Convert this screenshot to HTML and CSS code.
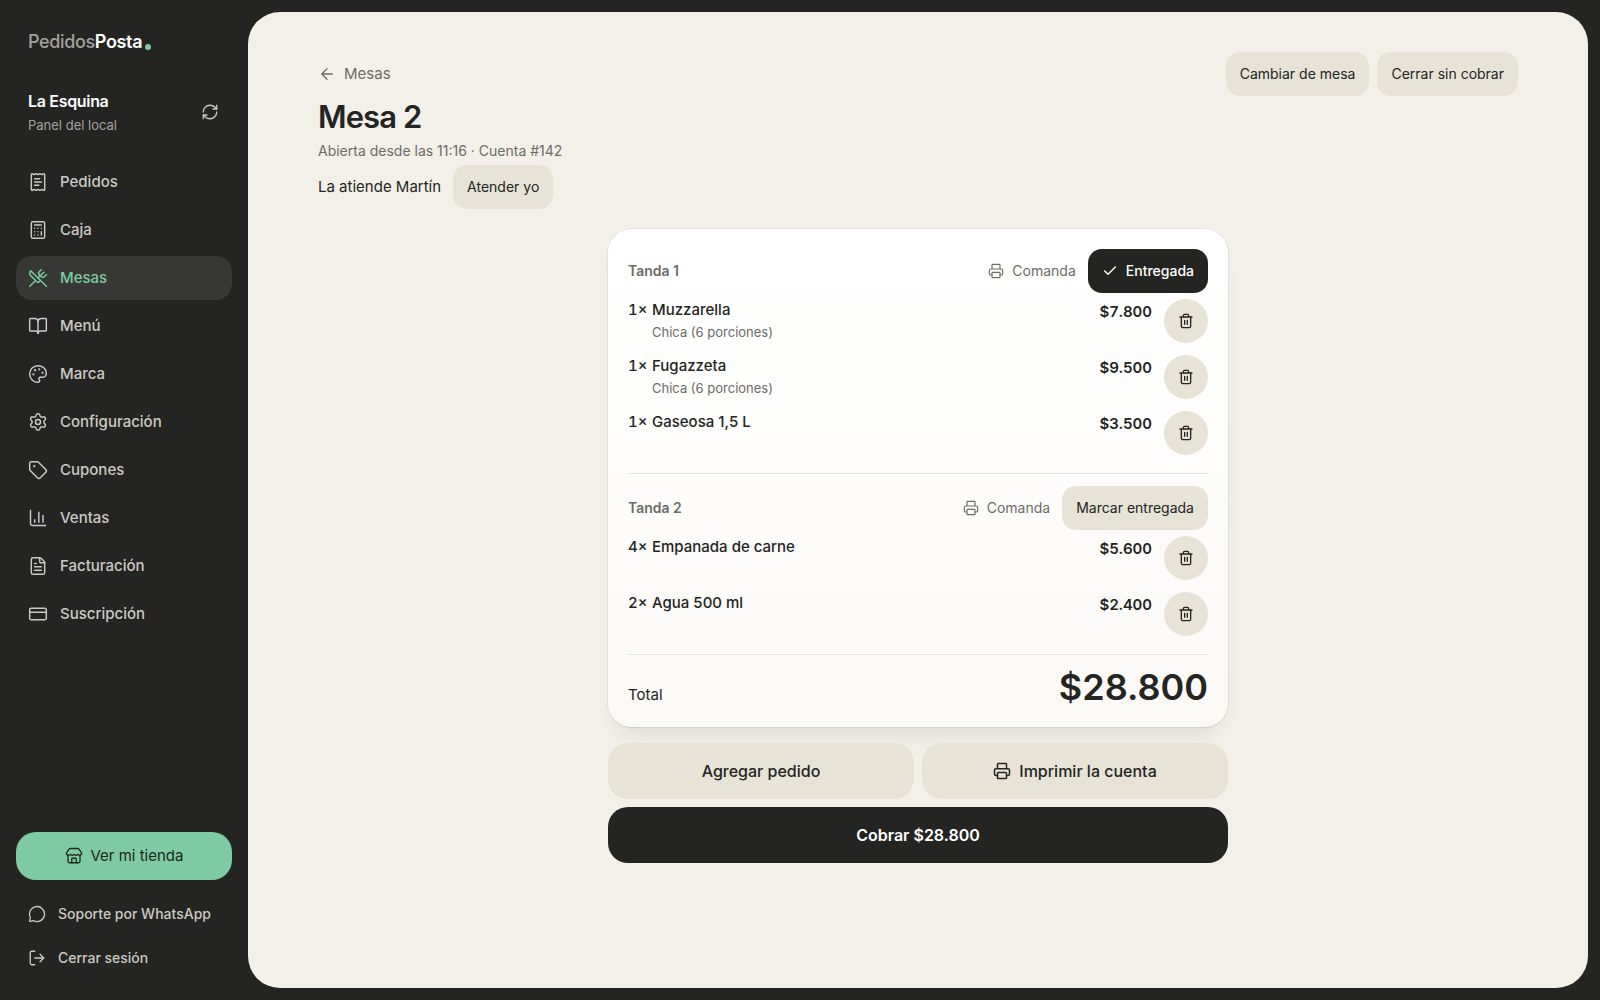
FILE: index.html
```html
<!DOCTYPE html>
<html lang="es">
<head>
<meta charset="utf-8">
<meta name="viewport" content="width=device-width, initial-scale=1">
<title>Mesa 2 · PedidosPosta</title>
<link rel="stylesheet" href="styles.css">
</head>
<body>
<svg class="sprite" aria-hidden="true">
  <symbol id="receipt" viewBox="0 0 24 24"><path d="M13 16H8M14 8H8M16 12H8M4 3a1 1 0 0 1 1-1 1.3 1.3 0 0 1 .7.2l.933.6a1.3 1.3 0 0 0 1.4 0l.934-.6a1.3 1.3 0 0 1 1.4 0l.933.6a1.3 1.3 0 0 0 1.4 0l.933-.6a1.3 1.3 0 0 1 1.4 0l.934.6a1.3 1.3 0 0 0 1.4 0l.933-.6A1.3 1.3 0 0 1 19 2a1 1 0 0 1 1 1v18a1 1 0 0 1-1 1 1.3 1.3 0 0 1-.7-.2l-.933-.6a1.3 1.3 0 0 0-1.4 0l-.934.6a1.3 1.3 0 0 1-1.4 0l-.933-.6a1.3 1.3 0 0 0-1.4 0l-.933.6a1.3 1.3 0 0 1-1.4 0l-.934-.6a1.3 1.3 0 0 0-1.4 0l-.933.6a1.3 1.3 0 0 1-.7.2 1 1 0 0 1-1-1z"/></symbol>
  <symbol id="calculator" viewBox="0 0 24 24"><rect width="16" height="20" x="4" y="2" rx="2"/><path d="M8 6h8M16 14v4M16 10h.01M12 10h.01M8 10h.01M12 14h.01M8 14h.01M12 18h.01M8 18h.01"/></symbol>
  <symbol id="utensils" viewBox="0 0 24 24"><path d="m16 2-2.3 2.3a3 3 0 0 0 0 4.2l1.8 1.8a3 3 0 0 0 4.2 0L22 8"/><path d="M15 15 3.3 3.3a4.2 4.2 0 0 0 0 6l7.3 7.3c.7.7 2 .7 2.8 0L15 15Zm0 0 7 7"/><path d="m2.1 21.8 6.4-6.3M19 5l-7 7"/></symbol>
  <symbol id="book" viewBox="0 0 24 24"><path d="M12 7v14"/><path d="M3 18a1 1 0 0 1-1-1V4a1 1 0 0 1 1-1h5a4 4 0 0 1 4 4 4 4 0 0 1 4-4h5a1 1 0 0 1 1 1v13a1 1 0 0 1-1 1h-6a3 3 0 0 0-3 3 3 3 0 0 0-3-3z"/></symbol>
  <symbol id="palette" viewBox="0 0 24 24"><path d="M12 22a1 1 0 0 1 0-20 10 9 0 0 1 10 9 5 5 0 0 1-5 5h-2.25a1.75 1.75 0 0 0-1.4 2.8l.3.4a1.75 1.75 0 0 1-1.4 2.8z"/><circle cx="13.5" cy="6.5" r=".5"/><circle cx="17.5" cy="10.5" r=".5"/><circle cx="6.5" cy="12.5" r=".5"/><circle cx="8.5" cy="7.5" r=".5"/></symbol>
  <symbol id="settings" viewBox="0 0 24 24"><path d="M9.671 4.136a2.34 2.34 0 0 1 4.659 0 2.34 2.34 0 0 0 3.319 1.915 2.34 2.34 0 0 1 2.33 4.033 2.34 2.34 0 0 0 0 3.831 2.34 2.34 0 0 1-2.33 4.033 2.34 2.34 0 0 0-3.319 1.915 2.34 2.34 0 0 1-4.659 0 2.34 2.34 0 0 0-3.32-1.915 2.34 2.34 0 0 1-2.33-4.033 2.34 2.34 0 0 0 0-3.831A2.34 2.34 0 0 1 6.35 6.051a2.34 2.34 0 0 0 3.319-1.915"/><circle cx="12" cy="12" r="3"/></symbol>
  <symbol id="tag" viewBox="0 0 24 24"><path d="M12.586 2.586A2 2 0 0 0 11.172 2H4a2 2 0 0 0-2 2v7.172a2 2 0 0 0 .586 1.414l8.704 8.704a2.426 2.426 0 0 0 3.42 0l6.58-6.58a2.426 2.426 0 0 0 0-3.42z"/><circle cx="7.5" cy="7.5" r=".5"/></symbol>
  <symbol id="chart" viewBox="0 0 24 24"><path d="M3 3v16a2 2 0 0 0 2 2h16M18 17V9M13 17V5M8 17v-3"/></symbol>
  <symbol id="file" viewBox="0 0 24 24"><path d="M6 22a2 2 0 0 1-2-2V4a2 2 0 0 1 2-2h8a2.4 2.4 0 0 1 1.704.706l3.588 3.588A2.4 2.4 0 0 1 20 8v12a2 2 0 0 1-2 2z"/><path d="M14 2v5a1 1 0 0 0 1 1h5M10 9H8M16 13H8M16 17H8"/></symbol>
  <symbol id="card" viewBox="0 0 24 24"><rect width="20" height="14" x="2" y="5" rx="2"/><path d="M2 10h20"/></symbol>
  <symbol id="store" viewBox="0 0 24 24"><path d="M15 21v-5a1 1 0 0 0-1-1h-4a1 1 0 0 0-1 1v5"/><path d="M17.774 10.31a1.12 1.12 0 0 0-1.549 0 2.5 2.5 0 0 1-3.451 0 1.12 1.12 0 0 0-1.548 0 2.5 2.5 0 0 1-3.452 0 1.12 1.12 0 0 0-1.549 0 2.5 2.5 0 0 1-3.77-3.248l2.889-4.184A2 2 0 0 1 7 2h10a2 2 0 0 1 1.653.873l2.895 4.192a2.5 2.5 0 0 1-3.774 3.244"/><path d="M4 10.95V19a2 2 0 0 0 2 2h12a2 2 0 0 0 2-2v-8.05"/></symbol>
  <symbol id="message" viewBox="0 0 24 24"><path d="M2.992 16.342a2 2 0 0 1 .094 1.167l-1.065 3.29a1 1 0 0 0 1.236 1.168l3.413-.998a2 2 0 0 1 1.099.092 10 10 0 1 0-4.777-4.719"/></symbol>
  <symbol id="logout" viewBox="0 0 24 24"><path d="m16 17 5-5-5-5M21 12H9M9 21H5a2 2 0 0 1-2-2V5a2 2 0 0 1 2-2h4"/></symbol>
  <symbol id="refresh" viewBox="0 0 24 24"><path d="M3 12a9 9 0 0 1 9-9 9.75 9.75 0 0 1 6.74 2.74L21 8"/><path d="M21 3v5h-5M21 12a9 9 0 0 1-9 9 9.75 9.75 0 0 1-6.74-2.74L3 16"/><path d="M8 16H3v5"/></symbol>
  <symbol id="printer" viewBox="0 0 24 24"><path d="M6 18H4a2 2 0 0 1-2-2v-5a2 2 0 0 1 2-2h16a2 2 0 0 1 2 2v5a2 2 0 0 1-2 2h-2M6 9V3a1 1 0 0 1 1-1h10a1 1 0 0 1 1 1v6"/><rect x="6" y="14" width="12" height="8" rx="1"/></symbol>
  <symbol id="trash" viewBox="0 0 24 24"><path d="M10 11v6M14 11v6M19 6v14a2 2 0 0 1-2 2H7a2 2 0 0 1-2-2V6M3 6h18M8 6V4a2 2 0 0 1 2-2h4a2 2 0 0 1 2 2v2"/></symbol>
  <symbol id="check" viewBox="0 0 24 24"><path d="M20 6 9 17l-5-5"/></symbol>
  <symbol id="arrow-left" viewBox="0 0 24 24"><path d="m12 19-7-7 7-7M19 12H5"/></symbol>
</svg>

<div class="app">
  <aside class="sidebar">
    <a class="logo" href="#"><span class="logo-light">Pedidos</span>Posta<span class="logo-dot"></span></a>
    <div class="shop">
      <div>
        <div class="shop-name">La Esquina</div>
        <div class="shop-sub">Panel del local</div>
      </div>
      <button class="refresh" type="button" aria-label="Actualizar"><svg class="icon icon-18"><use href="#refresh"/></svg></button>
    </div>
    <nav class="nav">
      <a class="nav-link" href="#"><svg class="icon icon-20"><use href="#receipt"/></svg>Pedidos</a>
      <a class="nav-link" href="#"><svg class="icon icon-20"><use href="#calculator"/></svg>Caja</a>
      <a class="nav-link active" href="#" aria-current="page"><svg class="icon icon-20"><use href="#utensils"/></svg>Mesas</a>
      <a class="nav-link" href="#"><svg class="icon icon-20"><use href="#book"/></svg>Menú</a>
      <a class="nav-link" href="#"><svg class="icon icon-20"><use href="#palette"/></svg>Marca</a>
      <a class="nav-link" href="#"><svg class="icon icon-20"><use href="#settings"/></svg>Configuración</a>
      <a class="nav-link" href="#"><svg class="icon icon-20"><use href="#tag"/></svg>Cupones</a>
      <a class="nav-link" href="#"><svg class="icon icon-20"><use href="#chart"/></svg>Ventas</a>
      <a class="nav-link" href="#"><svg class="icon icon-20"><use href="#file"/></svg>Facturación</a>
      <a class="nav-link" href="#"><svg class="icon icon-20"><use href="#card"/></svg>Suscripción</a>
    </nav>
    <div class="sidebar-foot">
      <a class="store-link" href="#"><svg class="icon icon-18"><use href="#store"/></svg>Ver mi tienda</a>
      <a class="foot-link" href="#"><svg class="icon icon-18"><use href="#message"/></svg>Soporte por WhatsApp</a>
      <button class="foot-link" type="button"><svg class="icon icon-18"><use href="#logout"/></svg>Cerrar sesión</button>
    </div>
  </aside>

  <main class="main">
    <div class="content">
      <header class="head">
        <div>
          <a class="back" href="#"><svg class="icon icon-18"><use href="#arrow-left"/></svg>Mesas</a>
          <h1 class="title">Mesa 2</h1>
          <p class="meta">Abierta desde las 11:16 · Cuenta #142</p>
          <div class="waiter"><span>La atiende Martín</span><button class="btn" type="button">Atender yo</button></div>
        </div>
        <div class="head-actions">
          <button class="btn" type="button">Cambiar de mesa</button>
          <button class="btn" type="button">Cerrar sin cobrar</button>
        </div>
      </header>

      <div class="bill">
        <div class="ticket">
          <section class="round">
            <div class="round-head">
              <h2 class="round-title">Tanda 1</h2>
              <button class="ghost" type="button"><svg class="icon icon-16"><use href="#printer"/></svg>Comanda</button>
              <button class="btn dark" type="button"><svg class="icon icon-16 strong"><use href="#check"/></svg>Entregada</button>
            </div>
            <ul class="items">
              <li class="item"><span class="qty">1×</span><div class="name">Muzzarella<div class="detail">Chica (6 porciones)</div></div><span class="price">$7.800</span><button class="trash" type="button" aria-label="Quitar Muzzarella"><svg class="icon icon-16 strong"><use href="#trash"/></svg></button></li>
              <li class="item"><span class="qty">1×</span><div class="name">Fugazzeta<div class="detail">Chica (6 porciones)</div></div><span class="price">$9.500</span><button class="trash" type="button" aria-label="Quitar Fugazzeta"><svg class="icon icon-16 strong"><use href="#trash"/></svg></button></li>
              <li class="item"><span class="qty">1×</span><div class="name">Gaseosa 1,5 L</div><span class="price">$3.500</span><button class="trash" type="button" aria-label="Quitar Gaseosa"><svg class="icon icon-16 strong"><use href="#trash"/></svg></button></li>
            </ul>
          </section>
          <section class="round">
            <div class="round-head">
              <h2 class="round-title">Tanda 2</h2>
              <button class="ghost" type="button"><svg class="icon icon-16"><use href="#printer"/></svg>Comanda</button>
              <button class="btn" type="button">Marcar entregada</button>
            </div>
            <ul class="items">
              <li class="item"><span class="qty">4×</span><div class="name">Empanada de carne</div><span class="price">$5.600</span><button class="trash" type="button" aria-label="Quitar Empanada de carne"><svg class="icon icon-16 strong"><use href="#trash"/></svg></button></li>
              <li class="item"><span class="qty">2×</span><div class="name">Agua 500 ml</div><span class="price">$2.400</span><button class="trash" type="button" aria-label="Quitar Agua 500 ml"><svg class="icon icon-16 strong"><use href="#trash"/></svg></button></li>
            </ul>
          </section>
          <div class="total"><span>Total</span><strong class="total-value">$28.800</strong></div>
        </div>
        <div class="actions">
          <button class="action" type="button">Agregar pedido</button>
          <button class="action" type="button"><svg class="icon icon-18 strong"><use href="#printer"/></svg>Imprimir la cuenta</button>
          <button class="action pay" type="button">Cobrar $28.800</button>
        </div>
      </div>
    </div>
  </main>
</div>
</body>
</html>
```
FILE: styles.css
```css
:root {
  --ink: #242522;
  --paper: #f3f0e9;
  --sand: #e7e3d7;
  --muted: #6d6c67;
  --green: #7ecba3;
  --line: #e5e4e1;
}

* { box-sizing: border-box; }

body {
  margin: 0;
  background: var(--ink);
  color: var(--ink);
  font-family: Inter, "Liberation Sans", sans-serif;
  font-size: 15px;
  line-height: 22px;
}

h1, h2, p, ul { margin: 0; padding: 0; }
ul { list-style: none; }
a { color: inherit; text-decoration: none; }
button { border: 0; background: none; color: inherit; font: inherit; cursor: pointer; }

.sprite { display: none; }
.icon { flex: none; fill: none; stroke: currentColor; stroke-width: 1.75; stroke-linecap: round; stroke-linejoin: round; }
.icon-16 { width: 16px; height: 16px; }
.icon-18 { width: 18px; height: 18px; }
.icon-20 { width: 20px; height: 20px; }
.strong { stroke-width: 2; }

.app { display: grid; grid-template-columns: 248px 1fr; min-height: 100vh; }

/* Sidebar */
.sidebar { display: flex; flex-direction: column; padding: 28px 16px 20px; color: #cbc9c4; }
.logo { display: flex; padding: 0 12px; color: #fff; font-size: 18px; font-weight: 600; line-height: 28px; letter-spacing: -0.02em; }
.logo-light { color: #a3a19d; font-weight: 500; }
.logo-dot { align-self: flex-end; width: 6px; height: 6px; margin: 0 0 6px 3px; border-radius: 50%; background: var(--green); }
.shop { display: flex; align-items: center; justify-content: space-between; padding: 0 0 0 12px; margin: 32px 0 24px; }
.shop-name { color: #fff; font-size: 16px; font-weight: 600; line-height: 26px; letter-spacing: -0.02em; }
.shop-sub { color: #a3a19d; font-size: 13px; }
.refresh { display: grid; place-items: center; width: 44px; height: 44px; padding: 0; }
.nav { display: flex; flex-direction: column; gap: 4px; }
.nav-link { display: flex; align-items: center; gap: 12px; height: 44px; padding: 0 12px; border-radius: 16px; font-weight: 500; }
.nav-link.active { background: #373835; color: var(--green); }
.sidebar-foot { display: flex; flex-direction: column; margin-top: auto; }
.store-link { display: flex; align-items: center; justify-content: center; gap: 8px; height: 48px; margin-bottom: 12px; border-radius: 20px; background: var(--green); color: var(--ink); }
.foot-link { display: flex; align-items: center; gap: 12px; height: 44px; padding: 0 12px; font-size: 14px; font-weight: 500; }

/* Page */
.main { margin: 12px 12px 12px 0; padding: 40px 24px; border-radius: 32px; background: var(--paper); }
.content { max-width: 1200px; margin: 0 auto; }
.head { display: flex; align-items: flex-start; justify-content: space-between; }
.head-actions { display: flex; gap: 8px; }
.back { display: flex; align-items: center; gap: 8px; height: 44px; color: var(--muted); }
.title { font-size: 31px; font-weight: 600; line-height: 41px; letter-spacing: -0.03em; }
.meta { line-height: 28px; color: var(--muted); font-size: 14px; }
.waiter { display: flex; align-items: center; gap: 12px; }
.btn { display: flex; align-items: center; gap: 8px; height: 44px; padding: 0 14px; border-radius: 14px; background: var(--sand); font-size: 14px; white-space: nowrap; }
.btn.dark { background: var(--ink); color: #fff; font-weight: 500; }

/* Bill */
.bill { max-width: 620px; margin: 20px auto 0; }
.ticket {
  padding: 20px;
  border-radius: 24px;
  background: linear-gradient(#fff, #faf9f6);
  box-shadow: 0 0 0 1px rgba(36, 37, 34, .05), 0 1px 2px rgba(36, 37, 34, .06), 0 16px 24px -12px rgba(36, 37, 34, .12);
}
.round { padding-bottom: 18px; margin-bottom: 12px; border-bottom: 1px solid var(--line); }
.round-head { display: flex; align-items: center; gap: 12px; }
.round-title { margin-right: auto; color: var(--muted); font-size: 14px; font-weight: 600; }
.ghost { display: flex; align-items: center; gap: 8px; height: 44px; padding: 0; color: var(--muted); font-size: 14px; }
.items { display: flex; flex-direction: column; gap: 12px; margin-top: 6px; }
.item { display: flex; align-items: flex-start; }
.qty { width: 24px; font-weight: 500; font-variant-numeric: tabular-nums; }
.name { flex: 1; font-weight: 500; }
.detail { color: var(--muted); font-size: 13px; font-weight: 400; }
.price { margin-right: 12px; font-weight: 600; line-height: 26px; font-variant-numeric: tabular-nums; }
.trash { display: grid; place-items: center; width: 44px; height: 44px; padding: 0; border-radius: 50%; background: var(--sand); }
.total { display: flex; align-items: baseline; justify-content: space-between; }
.total-value { font-size: 36px; font-weight: 600; line-height: 40px; }
.actions { display: grid; grid-template-columns: 1fr 1fr; gap: 8px; margin-top: 16px; }
.action { display: flex; align-items: center; justify-content: center; gap: 8px; height: 56px; border-radius: 20px; background: var(--sand); font-size: 16px; font-weight: 500; }
.pay { grid-column: 1 / -1; background: var(--ink); color: #fff; font-weight: 600; }
```
